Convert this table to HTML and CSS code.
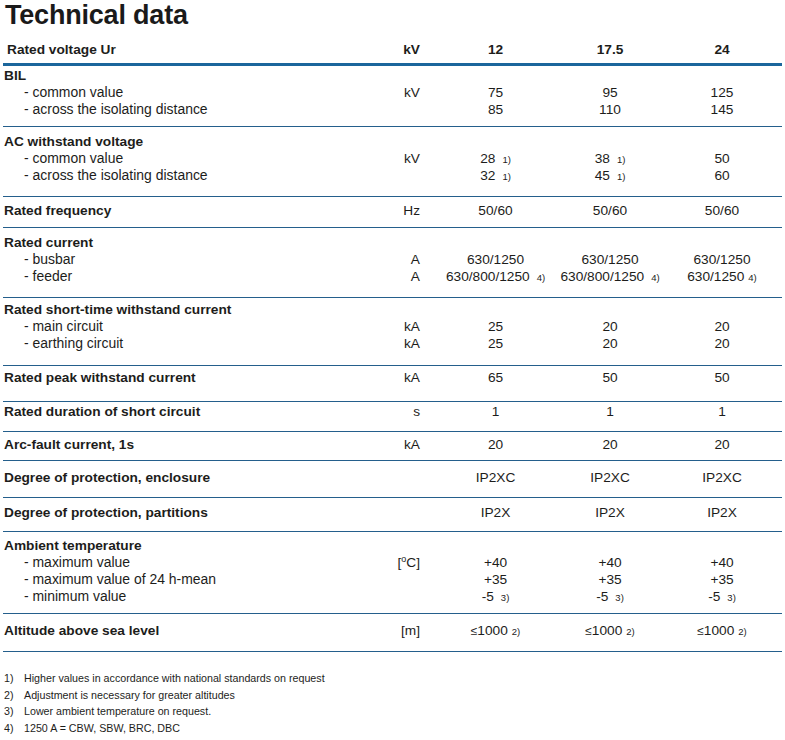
FILE: index.html
```html
<!DOCTYPE html>
<html lang="en">
<head>
<meta charset="utf-8">
<title>Technical data</title>
<link rel="stylesheet" href="styles.css">
</head>
<body>
<div class="page">
  <h1 class="title">Technical data</h1>
  <div class="table">
    <div class="line head">
      <span class="lbl">Rated voltage Ur</span><span class="unit">kV</span><span class="v">12</span><span class="v">17.5</span><span class="v">24</span>
    </div>

    <div class="grp g-bil">
      <div class="line"><span class="lbl h">BIL</span></div>
      <div class="line"><span class="lbl sub">- common value</span><span class="unit">kV</span><span class="v">75</span><span class="v">95</span><span class="v">125</span></div>
      <div class="line"><span class="lbl sub">- across the isolating distance</span><span class="unit"></span><span class="v">85</span><span class="v">110</span><span class="v">145</span></div>
    </div>

    <div class="grp g-ac">
      <div class="line"><span class="lbl h">AC withstand voltage</span></div>
      <div class="line"><span class="lbl sub">- common value</span><span class="unit">kV</span><span class="v">28<span class="fn">1)</span></span><span class="v">38<span class="fn">1)</span></span><span class="v">50</span></div>
      <div class="line"><span class="lbl sub">- across the isolating distance</span><span class="unit"></span><span class="v">32<span class="fn">1)</span></span><span class="v">45<span class="fn">1)</span></span><span class="v">60</span></div>
    </div>

    <div class="grp g-freq">
      <div class="line"><span class="lbl h">Rated frequency</span><span class="unit">Hz</span><span class="v">50/60</span><span class="v">50/60</span><span class="v">50/60</span></div>
    </div>

    <div class="grp g-cur">
      <div class="line"><span class="lbl h">Rated current</span></div>
      <div class="line"><span class="lbl sub">- busbar</span><span class="unit">A</span><span class="v">630/1250</span><span class="v">630/1250</span><span class="v">630/1250</span></div>
      <div class="line"><span class="lbl sub">- feeder</span><span class="unit">A</span><span class="v">630/800/1250<span class="fn">4)</span></span><span class="v">630/800/1250<span class="fn">4)</span></span><span class="v">630/1250<span class="fn fn-near">4)</span></span></div>
    </div>

    <div class="grp g-short">
      <div class="line"><span class="lbl h">Rated short-time withstand current</span></div>
      <div class="line"><span class="lbl sub">- main circuit</span><span class="unit">kA</span><span class="v">25</span><span class="v">20</span><span class="v">20</span></div>
      <div class="line"><span class="lbl sub">- earthing circuit</span><span class="unit">kA</span><span class="v">25</span><span class="v">20</span><span class="v">20</span></div>
    </div>

    <div class="grp g-peak">
      <div class="line"><span class="lbl h">Rated peak withstand current</span><span class="unit">kA</span><span class="v">65</span><span class="v">50</span><span class="v">50</span></div>
    </div>

    <div class="grp g-dur">
      <div class="line"><span class="lbl h">Rated duration of short circuit</span><span class="unit">s</span><span class="v">1</span><span class="v">1</span><span class="v">1</span></div>
    </div>

    <div class="grp g-arc">
      <div class="line"><span class="lbl h">Arc-fault current, 1s</span><span class="unit">kA</span><span class="v">20</span><span class="v">20</span><span class="v">20</span></div>
    </div>

    <div class="grp g-encl">
      <div class="line"><span class="lbl h">Degree of protection, enclosure</span><span class="unit"></span><span class="v">IP2XC</span><span class="v">IP2XC</span><span class="v">IP2XC</span></div>
    </div>

    <div class="grp g-part">
      <div class="line"><span class="lbl h">Degree of protection, partitions</span><span class="unit"></span><span class="v">IP2X</span><span class="v">IP2X</span><span class="v">IP2X</span></div>
    </div>

    <div class="grp g-amb">
      <div class="line"><span class="lbl h">Ambient temperature</span></div>
      <div class="line"><span class="lbl sub">- maximum value</span><span class="unit">[<sup class="deg">o</sup>C]</span><span class="v">+40</span><span class="v">+40</span><span class="v">+40</span></div>
      <div class="line"><span class="lbl sub">- maximum value of 24 h-mean</span><span class="unit"></span><span class="v">+35</span><span class="v">+35</span><span class="v">+35</span></div>
      <div class="line"><span class="lbl sub">- minimum value</span><span class="unit"></span><span class="v">-5<span class="fn">3)</span></span><span class="v">-5<span class="fn">3)</span></span><span class="v">-5<span class="fn">3)</span></span></div>
    </div>

    <div class="grp g-alt">
      <div class="line"><span class="lbl h">Altitude above sea level</span><span class="unit">[m]</span><span class="v"><span class="le">&le;</span>1000<span class="fn fn-near">2)</span></span><span class="v"><span class="le">&le;</span>1000<span class="fn fn-near">2)</span></span><span class="v"><span class="le">&le;</span>1000<span class="fn fn-near">2)</span></span></div>
    </div>
  </div>

  <ol class="notes">
    <li><span class="num">1)</span><span>Higher values in accordance with national standards on request</span></li>
    <li><span class="num">2)</span><span>Adjustment is necessary for greater altitudes</span></li>
    <li><span class="num">3)</span><span>Lower ambient temperature on request.</span></li>
    <li><span class="num">4)</span><span>1250 A = CBW, SBW, BRC, DBC</span></li>
  </ol>
</div>
</body>
</html>
```

FILE: styles.css
```css
html, body {
  margin: 0;
  padding: 0;
  background: #ffffff;
}

body {
  font-family: "Liberation Sans", Arial, Helvetica, sans-serif;
  color: #1d1d1b;
  width: 785px;
}

.page {
  padding: 0 3px;
}

.title {
  margin: 0;
  padding-left: 2px;
  font-size: 27px;
  line-height: 30px;
  font-weight: bold;
  letter-spacing: -0.2px;
  color: #1a1a1a;
}

.table {
  width: 779px;
}

.line {
  display: grid;
  grid-template-columns: 377px 58px 115px 114px 110px;
  font-size: 13.7px;
  line-height: 17px;
  white-space: nowrap;
}

.lbl {
  padding-left: 1px;
}

.lbl.h {
  font-weight: bold;
}

.lbl.sub {
  padding-left: 21px;
  font-size: 13.95px;
}

.unit {
  text-align: right;
  padding-right: 18px;
}

.v {
  text-align: center;
}

.fn {
  font-size: 9.5px;
  line-height: 0;
  margin-left: 7px;
}

.fn-near {
  margin-left: 4px;
}

.le {
  font-size: 12px;
  line-height: 0;
}

.deg {
  font-size: 9px;
  line-height: 0;
  vertical-align: 5px;
}

.head {
  font-weight: bold;
  padding-top: 11px;
  padding-bottom: 5px;
  border-bottom: 3px solid #1b669c;
}

.head .lbl {
  padding-left: 4px;
}

.grp {
  border-bottom: 1px solid #245f8c;
}

.g-bil   { padding: 1px 0 8px; }
.g-ac    { padding: 6px 0 12px; }
.g-freq  { padding: 5px 0 8px; }
.g-cur   { padding: 6px 0 12px; }
.g-short { padding: 3px 0 13px; }
.g-peak  { padding: 3px 0 15px; }
.g-dur   { padding: 1px 0 11px; }
.g-arc   { padding: 4px 0 7px; }
.g-encl  { padding: 8px 0 11px; }
.g-part  { padding: 6px 0 10px; }
.g-amb   { padding: 5px 0 8px; }
.g-alt   { padding: 8px 0 12px; }

.notes {
  list-style: none;
  margin: 18px 0 0;
  padding: 0;
  font-size: 10.7px;
  line-height: 16.7px;
}

.notes li {
  display: grid;
  grid-template-columns: 20px auto;
  padding-left: 1px;
}
```
